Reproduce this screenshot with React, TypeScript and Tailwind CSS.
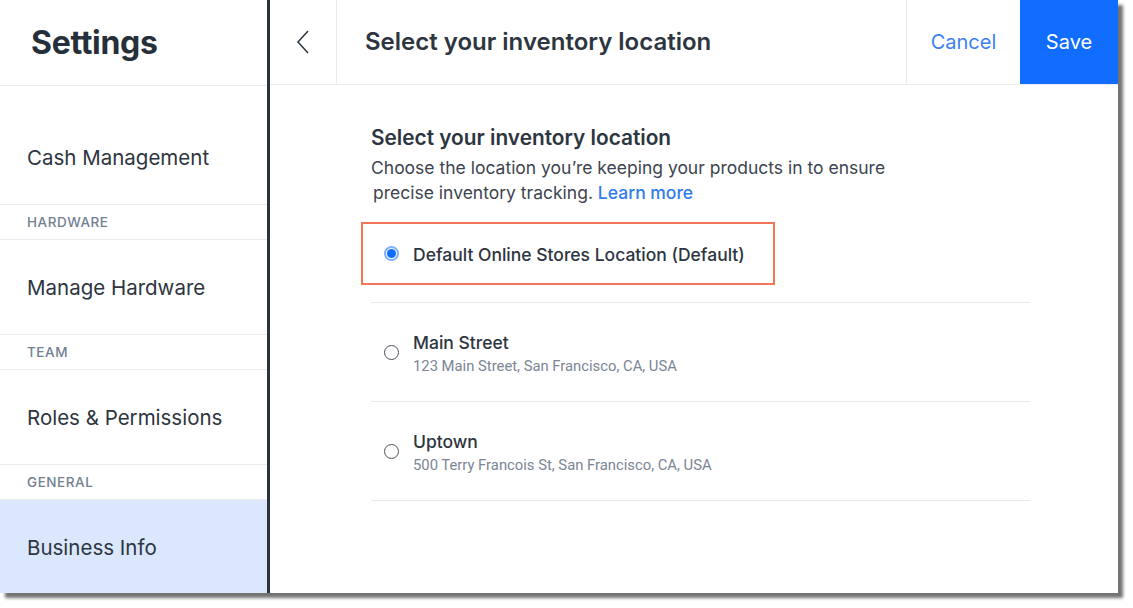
import { useState } from "react";

const font = { fontFamily: "Inter, 'Noto Sans', sans-serif" };

type Loc = { id: string; name: string; address?: string };

const locations: Loc[] = [
  { id: "default", name: "Default Online Stores Location (Default)" },
  { id: "main", name: "Main Street", address: "123 Main Street, San Francisco, CA, USA" },
  { id: "uptown", name: "Uptown", address: "500 Terry Francois St, San Francisco, CA, USA" },
];

function SideItem({ label, active }: { label: string; active?: boolean }) {
  return (
    <div
      className={`h-[95px] shrink-0 flex items-center pl-[27px] pt-[2px] text-[20.5px] text-[#2d3540] ${
        active ? "bg-[#dbe7fc]" : "border-b border-[#e9ebee]"
      }`}
    >
      {label}
    </div>
  );
}

function SideLabel({ label }: { label: string }) {
  return (
    <div className="h-[35px] shrink-0 flex items-center pl-[27px] pt-[1px] text-[13.5px] font-medium tracking-[0.04em] text-[#728091] border-b border-[#e9ebee]">
      {label}
    </div>
  );
}

function Radio({ checked }: { checked: boolean }) {
  return checked ? (
    <span className="w-[15px] h-[15px] rounded-full border-[2px] border-[#7fb0ff] flex items-center justify-center shrink-0">
      <span className="w-[9px] h-[9px] rounded-full bg-[#116dff]" />
    </span>
  ) : (
    <span className="w-[15px] h-[15px] rounded-full border-[1.5px] border-[#4a4f57] shrink-0" />
  );
}

export default function App() {
  const [selected, setSelected] = useState("default");

  return (
    <div className="w-[1133px] h-[608px] bg-white" style={font}>
      <div className="w-[1118px] h-[593px] flex bg-white shadow-[5px_5px_3px_rgba(0,0,0,0.55)]">
        {/* Sidebar */}
        <aside className="w-[270px] shrink-0 border-r-[3px] border-[#2a3441] flex flex-col overflow-hidden">
          <div className="h-[86px] shrink-0 flex items-center pl-[31px] border-b border-[#e9ebee]">
            <h1 className="text-[32px] font-bold text-[#26303b] tracking-[-0.01em]">Settings</h1>
          </div>
          <div className="h-[24px] shrink-0" />
          <SideItem label="Cash Management" />
          <SideLabel label="HARDWARE" />
          <SideItem label="Manage Hardware" />
          <SideLabel label="TEAM" />
          <SideItem label="Roles & Permissions" />
          <SideLabel label="GENERAL" />
          <SideItem label="Business Info" active />
        </aside>

        {/* Main */}
        <main className="flex-1 flex flex-col">
          <header className="h-[85px] flex border-b border-[#e9ebee]">
            <button className="w-[67px] border-r border-[#e9ebee] flex items-center justify-center">
              <svg width="14" height="26" viewBox="0 0 14 26" fill="none">
                <path d="M12 2 L2 13 L12 24" stroke="#2d3540" strokeWidth="1.5" />
              </svg>
            </button>
            <div className="flex-1 flex items-center pl-[28px] text-[24px] font-semibold text-[#2d3540]">
              Select your inventory location
            </div>
            <button className="w-[114px] border-l border-[#e9ebee] flex items-center justify-center text-[20px] text-[#3d7ff1]">
              Cancel
            </button>
            <button className="w-[98px] bg-[#116dff] flex items-center justify-center text-[20px] text-white">
              Save
            </button>
          </header>

          <section className="pl-[101px] pt-[40px] w-[760px]">
            <h2 className="text-[20.8px] leading-[26px] font-semibold text-[#2d3540]">
              Select your inventory location
            </h2>
            <p className="mt-[4px] text-[17.5px] leading-[25px] text-[#3d4450]">
              Choose the location you’re keeping your products in to ensure
              <br />
              <span className="pl-[2px]">precise inventory tracking. </span>
              <a className="text-[#2f7cf0] font-medium">Learn more</a>
            </p>

            <div className="-mt-[1px]">
              {locations.map((loc, i) => (
                <div
                  key={loc.id}
                  onClick={() => setSelected(loc.id)}
                  className="relative h-[99px] flex items-center pl-[13px] gap-[14px] border-b border-[#e7e9ec] cursor-pointer"
                >
                  <Radio checked={selected === loc.id} />
                  <div className="flex flex-col pt-[4px]">
                    <span className="text-[17.5px] leading-[22px] font-medium text-[#2d3540]">{loc.name}</span>
                    {loc.address && (
                      <span
                        className="mt-[2px] text-[14.8px] leading-[20px] text-[#7b8594]"
                        style={{ fontFamily: "Roboto, sans-serif" }}
                      >
                        {loc.address}
                      </span>
                    )}
                  </div>
                  {i === 0 && (
                    <div className="absolute left-[-10px] top-[18px] w-[414px] h-[63px] border-2 border-[#f47659] pointer-events-none" />
                  )}
                </div>
              ))}
            </div>
          </section>
        </main>
      </div>
    </div>
  );
}
